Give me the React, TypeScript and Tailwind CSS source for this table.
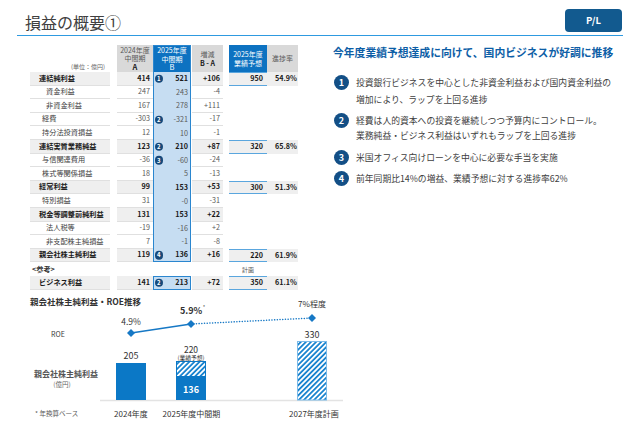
import React from "react";

type R = {
  l: string;
  v: 0 | 1 | 2;
  a: string;
  b: string;
  d: string;
  n?: number;
  f?: string;
  p?: string;
  last?: boolean;
};

const rows: R[] = [
  { l: "連結純利益", v: 0, a: "414", b: "521", d: "+106", n: 1, f: "950", p: "54.9%" },
  { l: "資金利益", v: 2, a: "247", b: "243", d: "-4" },
  { l: "非資金利益", v: 2, a: "167", b: "278", d: "+111" },
  { l: "経費", v: 1, a: "-303", b: "-321", d: "-17", n: 2 },
  { l: "持分法投資損益", v: 1, a: "12", b: "10", d: "-1" },
  { l: "連結実質業務純益", v: 0, a: "123", b: "210", d: "+87", n: 2, f: "320", p: "65.8%" },
  { l: "与信関連費用", v: 1, a: "-36", b: "-60", d: "-24", n: 3 },
  { l: "株式等関係損益", v: 1, a: "18", b: "5", d: "-13" },
  { l: "経常利益", v: 0, a: "99", b: "153", d: "+53", f: "300", p: "51.3%" },
  { l: "特別損益", v: 1, a: "31", b: "-0", d: "-31" },
  { l: "税金等調整前純利益", v: 0, a: "131", b: "153", d: "+22" },
  { l: "法人税等", v: 2, a: "-19", b: "-16", d: "+2" },
  { l: "非支配株主純損益", v: 2, a: "7", b: "-1", d: "-8" },
  { l: "親会社株主純利益", v: 0, a: "119", b: "136", d: "+16", n: 4, f: "220", p: "61.9%", last: true },
];

function Badge({ n }: { n: number }) {
  return (
    <div className="absolute left-[0.5px] top-1/2 -translate-y-1/2 w-[8.5px] h-[8.5px] rounded-full bg-[#17497a] text-white text-[6px] leading-none font-bold flex items-center justify-center">
      {n}
    </div>
  );
}

function Row({ r, biz }: { r: R; biz?: boolean }) {
  const bold = r.v === 0;
  const labelCls =
    r.v === 0
      ? "pl-[9px] font-bold text-[#1a1a1a] bg-[#efefef]"
      : r.v === 1
      ? "pl-[12px] text-[#404040]"
      : "pl-[16px] text-[#404040]";
  const numCls = bold ? "font-bold text-[#1a1a1a] bg-[#efefef]" : "text-[#595959]";
  const bCls = biz
    ? "border-[1.5px] border-[#2a86cf]"
    : r.last
    ? "border-x-[1.5px] border-b-[1.5px] border-[#2a86cf]"
    : "border-x-[1.5px] border-[#2a86cf]";
  return (
    <div className="flex h-[13.6px] text-[7.2px] leading-none">
      <div className={`w-[80px] flex items-center border-b border-[#e0e0e0] ${labelCls}`}>{r.l}</div>
      <div className="w-[7px]" />
      <div className={`w-[36px] flex items-center justify-end pr-[3px] border-b border-[#e0e0e0] ${numCls}`}>{r.a}</div>
      <div className={`relative w-[38px] flex items-center justify-end pr-[2px] bg-[#c6ddf2] ${bCls} ${bold ? "font-bold text-[#1a1a1a]" : "text-[#595959]"}`}>
        {r.n ? <Badge n={r.n} /> : null}
        {r.b}
      </div>
      <div className={`ml-[1px] w-[31px] flex items-center justify-end pr-[3px] border-b border-[#e0e0e0] ${numCls}`}>{r.d}</div>
      <div className="w-[6px]" />
      {r.f ? (
        <div className="w-[38px] flex items-center justify-end pr-[4px] bg-[#efefef] border-y-[1.5px] border-[#5aa6de] font-bold text-[#1a1a1a]">
          {r.f}
        </div>
      ) : (
        <div className="w-[38px]" />
      )}
      {r.p ? (
        <div className="w-[31px] flex items-center justify-end pr-[1px] bg-[#efefef] font-bold text-[#1a1a1a]">{r.p}</div>
      ) : (
        <div className="w-[31px]" />
      )}
    </div>
  );
}

function Table() {
  return (
    <div className="flex flex-col">
      <div className="flex h-[27px] text-[7px] leading-[8.5px]">
        <div className="w-[80px] flex items-end justify-end pr-[5px] pb-[1px] text-[6px] leading-[8px] text-[#666]">(単位：億円)</div>
        <div className="w-[7px]" />
        <div className="w-[36px] bg-[#d9d9d9] flex flex-col items-center justify-center text-[#595959]">
          <span className="block h-[8.5px]">2024年度</span>
          <span className="block h-[8.5px]">中間期</span>
          <span className="block h-[8.5px] font-bold text-[#1a1a1a] text-[7.5px]">A</span>
        </div>
        <div className="w-[38px] bg-[#0d72c1] border-x-[1.5px] border-t-[1.5px] border-[#2a86cf] flex flex-col items-center justify-center text-white">
          <span className="block h-[8.5px]">2025年度</span>
          <span className="block h-[8.5px]">中間期</span>
          <span className="block h-[8.5px] text-[7.5px]">B</span>
        </div>
        <div className="ml-[1px] w-[31px] bg-[#d9d9d9] flex flex-col items-center justify-center text-[#595959] leading-[9px]">
          <span>増減</span>
          <span className="font-bold text-[#1a1a1a]">B - A</span>
        </div>
        <div className="w-[6px]" />
        <div className="w-[38px] bg-[#0d72c1] flex flex-col items-center justify-center text-white leading-[9px]">
          <span>2025年度</span>
          <span>業績予想</span>
        </div>
        <div className="w-[31px] bg-[#d9d9d9] flex items-center justify-center text-[#595959]">進捗率</div>
      </div>
      {rows.map((r, i) => (
        <Row key={i} r={r} />
      ))}
      <div className="flex h-[13.6px] text-[7.2px] leading-none">
        <div className="w-[80px] flex items-center pl-[2px] font-bold text-[#333]">&lt;参考&gt;</div>
        <div className="w-[7px]" />
        <div className="w-[36px]" />
        <div className="w-[38px]" />
        <div className="ml-[1px] w-[31px]" />
        <div className="w-[6px]" />
        <div className="w-[38px] flex items-center justify-center pt-[1px] text-[6px] text-[#555]">計画</div>
        <div className="w-[31px]" />
      </div>
      <Row r={{ l: "ビジネス利益", v: 0, a: "141", b: "213", d: "+72", n: 2, f: "350", p: "61.1%" }} biz />
    </div>
  );
}

const items: { n: number; lines: string[]; mt: string; lh: string; cm: string }[] = [
  {
    n: 1,
    lines: ["投資銀行ビジネスを中心とした非資金利益および国内資金利益の", "増加により、ラップを上回る進捗"],
    mt: "mt-[14.5px]",
    lh: "leading-[17px]",
    cm: "mt-[1px]",
  },
  {
    n: 2,
    lines: ["経費は人的資本への投資を継続しつつ予算内にコントロール。", "業務純益・ビジネス利益はいずれもラップを上回る進捗"],
    mt: "mt-[5px]",
    lh: "leading-[15px]",
    cm: "mt-0",
  },
  { n: 3, lines: ["米国オフィス向けローンを中心に必要な手当を実施"], mt: "mt-[7px]", lh: "leading-[15px]", cm: "mt-0" },
  { n: 4, lines: ["前年同期比14%の増益、業績予想に対する進捗率62%"], mt: "mt-[6px]", lh: "leading-[15px]", cm: "mt-0" },
];

function Bullets() {
  return (
    <div className="flex flex-col">
      <div className="text-[10.8px] leading-[14px] font-bold text-[#0d5ea6] whitespace-nowrap">
        今年度業績予想達成に向けて、国内ビジネスが好調に推移
      </div>
      {items.map((it) => (
        <div key={it.n} className={`flex items-start ${it.mt}`}>
          <div className={`w-[15px] h-[15px] ml-[1px] rounded-full bg-[#134f86] text-white text-[9px] font-bold leading-none flex items-center justify-center shrink-0 ${it.cm}`}>
            {it.n}
          </div>
          <div className={`ml-[7px] text-[8.8px] text-[#404040] whitespace-nowrap ${it.lh}`}>
            {it.lines.map((l, i) => (
              <div key={i}>{l}</div>
            ))}
          </div>
        </div>
      ))}
    </div>
  );
}

function Diamond({ x, y }: { x: number; y: number }) {
  const s = 4;
  return <polygon points={`${x},${y - s} ${x + s},${y} ${x},${y + s} ${x - s},${y}`} fill="#1678c5" />;
}

function Chart() {
  const blue = "#0b78c6";
  return (
    <svg width={315} height={118} viewBox="30 307 315 118" className="block overflow-visible">
      <defs>
        <pattern id="hatch" patternUnits="userSpaceOnUse" width={3.6} height={3.6} patternTransform="rotate(45)">
          <rect x={0} y={0} width={3.6} height={3.6} fill="#ffffff" />
          <rect x={0} y={0} width={1.8} height={3.6} fill="#1a84cf" />
        </pattern>
      </defs>
      <text x={58} y={334} fontSize={7} fill="#404040" textAnchor="middle" dominantBaseline="central">
        ROE
      </text>
      <text x={66} y={373} fontSize={8} fontWeight={700} fill="#555" textAnchor="middle" dominantBaseline="central">
        親会社株主純利益
      </text>
      <text x={62} y={383.5} fontSize={6.5} fill="#666" textAnchor="middle" dominantBaseline="central">
        (億円)
      </text>
      <text x={35} y={413} fontSize={6.5} fill="#595959" dominantBaseline="central">
        * 年換算ベース
      </text>
      <line x1={100} y1={400.5} x2={343} y2={400.5} stroke="#e3e3e3" strokeWidth={1.5} />
      <rect x={116} y={363} width={30} height={37} fill={blue} />
      <text x={131} y={355.5} fontSize={9} fill="#333" textAnchor="middle" dominantBaseline="central">
        205
      </text>
      <rect x={176.5} y={361.5} width={29} height={15} fill="url(#hatch)" stroke={blue} strokeWidth={1} />
      <rect x={176} y={376} width={30} height={24} fill={blue} />
      <text x={191} y={389} fontSize={9} fontWeight={700} fill="#ffffff" textAnchor="middle" dominantBaseline="central">
        136
      </text>
      <text x={191} y={348.5} fontSize={8.5} fill="#333" textAnchor="middle" dominantBaseline="central">
        220
      </text>
      <text x={191} y={357.8} fontSize={5.8} fill="#333" textAnchor="middle" dominantBaseline="central">
        (業績予想)
      </text>
      <rect x={297.5} y={341.5} width={29} height={58.5} fill="url(#hatch)" stroke="#7dbbe8" strokeWidth={1} />
      <text x={312} y={334} fontSize={9} fill="#333" textAnchor="middle" dominantBaseline="central">
        330
      </text>
      <line x1={131} y1={333} x2={191} y2={324} stroke="#1678c5" strokeWidth={1.5} />
      <line
        x1={191}
        y1={324}
        x2={312}
        y2={318}
        stroke="#1678c5"
        strokeWidth={1.5}
        strokeDasharray="0.1 2.6"
        strokeLinecap="round"
      />
      <Diamond x={131} y={333} />
      <Diamond x={191} y={324} />
      <Diamond x={312} y={318} />
      <text x={131} y={321} fontSize={8.5} fill="#333" textAnchor="middle" dominantBaseline="central">
        4.9%
      </text>
      <text x={191} y={310} fontSize={9} fontWeight={700} fill="#333" textAnchor="middle" dominantBaseline="central">
        5.9%
      </text>
      <text x={204} y={307} fontSize={5.5} fill="#333" textAnchor="middle" dominantBaseline="central">
        *
      </text>
      <text x={312} y={303} fontSize={8} fill="#333" textAnchor="middle" dominantBaseline="central">
        7%程度
      </text>
      <text x={131} y={413} fontSize={8} fill="#333" textAnchor="middle" dominantBaseline="central">
        2024年度
      </text>
      <text x={191.5} y={413} fontSize={8} fill="#333" textAnchor="middle" dominantBaseline="central">
        2025年度中間期
      </text>
      <text x={314} y={413} fontSize={8} fill="#333" textAnchor="middle" dominantBaseline="central">
        2027年度計画
      </text>
    </svg>
  );
}

export default function App() {
  return (
    <div className="w-[640px] h-[443px] bg-white overflow-hidden font-['Noto_Sans_CJK_JP','Noto_Sans',sans-serif]">
      <div className="mx-[17px] h-[36px] border-b-[1.5px] border-[#2e9ae0] flex items-start justify-between">
        <div className="pl-[8px] pt-[12px] text-[16px] leading-[20px] text-[#404040]">損益の概要①</div>
        <div className="mt-[9px] mr-[1px] w-[57px] h-[23px] rounded-[4px] bg-[#125a8f] text-white font-bold text-[9.5px] leading-none flex items-center justify-center">
          P/L
        </div>
      </div>
      <div className="flex pl-[30px]">
        <div className="w-[303px] pt-[9px]">
          <Table />
        </div>
        <div className="w-[290px] pt-[9px]">
          <Bullets />
        </div>
      </div>
      <div className="pl-[30px]">
        <div className="mt-[5px] text-[8.5px] leading-[12px] font-bold text-[#333]">親会社株主純利益・ROE推移</div>
        <Chart />
      </div>
    </div>
  );
}
